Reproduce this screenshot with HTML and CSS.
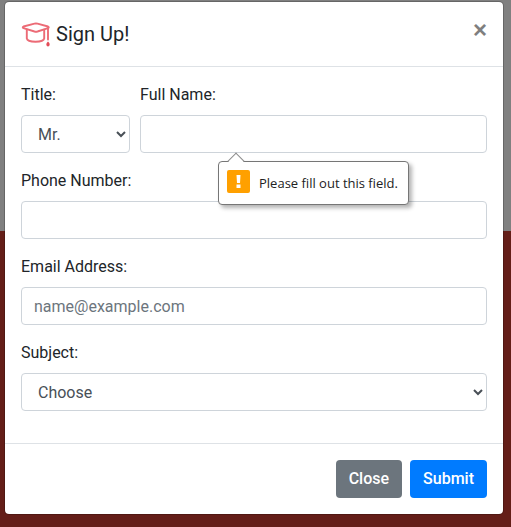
FILE: index.html
```html
<!DOCTYPE html>
<html lang="en">
<head>
<meta charset="utf-8">
<meta name="viewport" content="width=device-width, initial-scale=1">
<title>Sign Up</title>
<link rel="stylesheet" href="styles.css">
</head>
<body>
<main class="modal" role="dialog" aria-labelledby="modal-title">
  <header class="modal-header">
    <h1 class="modal-title" id="modal-title">
      <svg class="logo" viewBox="0 0 30 30" aria-hidden="true">
        <g fill="none" stroke="#ec6b76" stroke-width="1.900" stroke-linejoin="round" stroke-linecap="round">
          <path d="M2.500 9.200Q1 8.300 2.500 7.500L13.500 4.700Q15 4.300 16.500 4.700L27 7.500Q28.500 8.300 27 9.200L16.500 12.500Q15 12.900 13.500 12.500Z"/>
          <path d="M5.800 10.500V19.500Q6.500 22.600 14.500 22.700Q22.500 22.600 23.200 19.500V10.700"/>
          <path d="M27 9.500V20.500"/>
        </g>
        <path fill="#e34c58" d="M27 22.500Q28.900 24 28.700 25.500Q28.500 27.500 27 27.500T25.300 25.500Q25.200 24 27 22.500Z"/>
      </svg>
      <span>Sign Up!</span>
    </h1>
    <button class="dismiss" type="button" aria-label="Dismiss">×</button>
  </header>
  <form class="form" novalidate>
    <div class="modal-body">
      <div class="form-row">
        <div class="field field-title">
          <label for="title">Title:</label>
          <select class="control" id="title"><option>Mr.</option><option>Ms.</option></select>
        </div>
        <div class="field field-name">
          <label for="name">Full Name:</label>
          <input class="control" id="name" type="text" required>
          <div class="tooltip" role="alert">
            <svg class="warning" viewBox="0 0 23 23" aria-hidden="true">
              <rect width="23" height="23" rx="2" fill="#ffa000"/>
              <path fill="#fff" d="M9.500 5h4l-.5 8h-3zM9.500 14.500h4v3.500h-4z"/>
            </svg>
            <span>Please fill out this field.</span>
          </div>
        </div>
      </div>
      <div class="field">
        <label for="phone">Phone Number:</label>
        <input class="control" id="phone" type="tel">
      </div>
      <div class="field">
        <label for="email">Email Address:</label>
        <input class="control" id="email" type="email" placeholder="name@example.com">
      </div>
      <div class="field">
        <label for="subject">Subject:</label>
        <select class="control" id="subject"><option>Choose</option></select>
      </div>
    </div>
    <footer class="modal-footer">
      <button class="btn btn-secondary" type="button">Close</button>
      <button class="btn btn-primary" type="submit">Submit</button>
    </footer>
  </form>
</main>
</body>
</html>
```
FILE: styles.css
```css
*, *::before, *::after { box-sizing: border-box; }

html { background: linear-gradient(#808080 231px, #641e18 231px) no-repeat #641e18; min-height: 100%; }

body {
  margin: 0;
  padding: 1px 7px 12px 4px;
  font: 16px/24px Roboto, "Liberation Sans", sans-serif;
  color: #212529;
}

.modal {
  background: #fff;
  background-clip: padding-box;
  border: 1px solid rgba(0, 0, 0, .2);
  border-radius: 5px;
}

.modal-header {
  display: flex;
  align-items: flex-start;
  justify-content: space-between;
  padding: 16px;
  border-bottom: 1px solid #dee2e6;
}

.modal-title {
  display: flex;
  align-items: center;
  gap: 5px;
  height: 32px;
  margin: 0;
  font-size: 20px;
  line-height: 30px;
  font-weight: 400;
}

.logo { width: 30px; height: 30px; }

.dismiss {
  margin: -16px;
  padding: 16px;
  border: 0;
  background: none;
  color: #7f7f7f;
  font: 700 24px/24px "Liberation Sans", sans-serif;
}

.modal-body { padding: 16px; }

.form-row {
  display: grid;
  grid-template-columns: repeat(12, 1fr);
  column-gap: 10px;
}

.field { margin-bottom: 16px; }
.field-title { grid-column: span 3; }
.field-name { grid-column: span 9; position: relative; }

label { display: block; margin-bottom: 8px; }

.control {
  display: block;
  width: 100%;
  height: 38px;
  padding: 6px 12px;
  border: 1px solid #ced4da;
  border-radius: 4px;
  background: #fff;
  color: #495057;
  font: inherit;
}

.control::placeholder { color: #6c757d; opacity: 1; }

.tooltip {
  position: absolute;
  top: 78px;
  left: 78px;
  display: flex;
  align-items: center;
  gap: 9px;
  height: 44px;
  padding: 0 10px 0 8px;
  border: 1px solid #767676;
  border-radius: 4px;
  background: #fff;
  box-shadow: 3px 3px 4px rgba(0, 0, 0, .3);
  color: #222;
  font: 13px/20px "Open Sans", "Noto Sans", sans-serif;
  white-space: nowrap;
}

.tooltip::before {
  content: "";
  position: absolute;
  top: -7px;
  left: 11px;
  width: 12px;
  height: 12px;
  border: solid #8c8c8c;
  border-width: 1px 0 0 1px;
  background: linear-gradient(135deg, #fff 52%, transparent 52%);
  transform: rotate(45deg);
}

.warning { width: 23px; height: 23px; margin-top: -4px; }

.modal-footer {
  display: flex;
  justify-content: flex-end;
  gap: 8px;
  padding: 16px;
  border-top: 1px solid #dee2e6;
}

.btn {
  height: 38px;
  padding: 6px 12px;
  border: 1px solid transparent;
  border-radius: 4px;
  color: #fff;
  font: 500 16px/24px Roboto, "Liberation Sans", sans-serif;
}

.btn-secondary { background: #6c757d; }
.btn-primary { background: #007bff; }
```
